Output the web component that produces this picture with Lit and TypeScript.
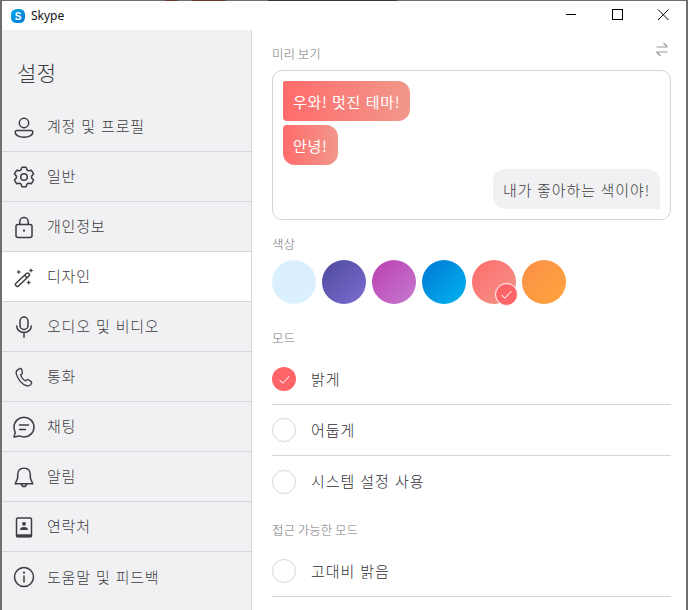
import {LitElement, html, svg, css} from 'lit';
import {customElement} from 'lit/decorators.js';

// six tooth gear, drawn around 12,12
function gearPath() {
  const pts: string[] = [];
  for (let k = 0; k < 6; k++) {
    const a = -90 + k * 60;
    for (const [r, d] of [[7.6, -24], [10, -12], [10, 12], [7.6, 24]]) {
      const rad = ((a + d) * Math.PI) / 180;
      pts.push(`${(12 + r * Math.cos(rad)).toFixed(2)} ${(12 + r * Math.sin(rad)).toFixed(2)}`);
    }
  }
  return `M${pts.join('L')}z`;
}

const icons = {
  user: svg`<circle cx="12" cy="8" r="4.7"/><path d="M5 15.500h14c1 0 1.800.8 1.800 1.800 0 3-4 5-8.800 5s-8.800-2-8.800-5c0-1 .8-1.800 1.800-1.800z"/>`,
  gear: svg`<circle cx="12" cy="12" r="3.300"/><path d="${gearPath()}" stroke-linejoin="round"/>`,
  lock: svg`<rect x="4" y="9.500" width="16" height="13" rx="2"/><path d="M7.800 9.500V6.700a4.200 4.200 0 0 1 8.400 0v2.800"/><circle cx="12" cy="15.700" r="1.100" fill="currentColor" stroke="none"/>`,
  wand: svg`<path d="M3.700 18.500 14.700 8.300a1.200 1.200 0 0 1 1.700 0l.8.8a1.200 1.200 0 0 1 0 1.700L6.300 21.200a1.200 1.200 0 0 1-1.700 0l-.9-.9a1.200 1.200 0 0 1 0-1.800zM12.600 10.200l2.500 2.600" stroke-linejoin="round"/><g fill="currentColor" stroke="none"><path d="M6.700 4.500l.7 1.800 1.800.7-1.800.7-.7 1.800-.7-1.800-1.800-.7 1.800-.7z"/><path d="M19 3l.7 1.800 1.800.7-1.800.7-.7 1.800-.7-1.800-1.800-.7 1.800-.7z"/><path d="M16.700 15l.7 1.800 1.800.7-1.800.7-.7 1.800-.7-1.800-1.800-.7 1.800-.7z"/></g>`,
  mic: svg`<rect x="8" y="2" width="8" height="12.500" rx="4"/><path d="M4.700 11c0 3.800 3.200 6.500 7.300 6.500s7.300-2.700 7.300-6.500M12 17.500v4.700"/>`,
  phone: svg`<g transform="translate(1.2 1.400) scale(.88)"><path d="M7.500 2.500 5 4c-1.500 1-2 2.500-1.500 4.500 1 3.500 2.500 6 4.500 8.500 2.500 3 5 4.500 7.500 5 2 .5 3.500 0 4.500-1.500l.8-1.200c.4-.7.2-1.500-.4-2l-3-2.200c-.7-.5-1.500-.4-2 .2l-1 1.200c-2.500-1-5-4-6-7l1.300-.8c.7-.5.9-1.300.6-2L9.500 3c-.4-.7-1.300-1-2-.5z"/></g>`,
  chat: svg`<path d="M12 2.300c5.500 0 10 4.200 10 9.800s-4.500 9.800-10 9.800c-1.700 0-3.200-.4-4.500-1l-5.500 1 1.300-4.500C2.500 15.800 2 14 2 12.100c0-5.600 4.500-9.800 10-9.800z" stroke-linejoin="round"/><path d="M7.500 10h9M7.500 14.500h6"/>`,
  bell: svg`<path d="M12 3c-3.800 0-6.300 2.800-6.300 6.300V13L3.200 18.800h17.600L18.300 13V9.300C18.300 5.800 15.800 3 12 3z" stroke-linejoin="round"/><path d="M9.500 18.800c.2 1.700 1.200 2.700 2.500 2.700s2.300-1 2.500-2.700"/>`,
  book: svg`<rect x="4.500" y="3" width="15" height="18.700" rx="1.500"/><rect x="4" y="19.300" width="16" height="2.900" fill="currentColor" stroke="none"/><circle cx="12" cy="8.800" r="1.900" fill="currentColor" stroke="none"/><path d="M8 15c0-2 1.500-3 4-3s4 1 4 3z" fill="currentColor" stroke="none"/>`,
  info: svg`<circle cx="12" cy="12" r="9.500"/><path d="M12 11v6"/><circle cx="12" cy="7.700" r="1.100" fill="currentColor" stroke="none"/>`,
};

const menu: [keyof typeof icons, string][] = [
  ['user', '계정 및 프로필'],
  ['gear', '일반'],
  ['lock', '개인정보'],
  ['wand', '디자인'],
  ['mic', '오디오 및 비디오'],
  ['phone', '통화'],
  ['chat', '채팅'],
  ['bell', '알림'],
  ['book', '연락처'],
  ['info', '도움말 및 피드백'],
];

const swatches = [
  'linear-gradient(135deg,#dbf0ff,#dbf0ff)',
  'linear-gradient(135deg,#4f4a9c,#7b6dd1)',
  'linear-gradient(135deg,#b93fb0,#c77ad0)',
  'linear-gradient(135deg,#0078d4,#00b4f0)',
  'linear-gradient(135deg,#ff6b6b,#f1978a)',
  'linear-gradient(135deg,#fa8e47,#ffa53e)',
];

const check = html`<svg viewBox="0 0 12 12" width="13" height="13" fill="none" stroke="#fff" stroke-width="1" opacity=".85"><path d="M1.500 6.500 4.500 9.300 10.500 3"/></svg>`;

@customElement('app-root')
export class AppRoot extends LitElement {
  static override styles = css`
    * {
      box-sizing: border-box;
      margin: 0;
      padding: 0;
    }

    :host {
      display: block;
      width: 688px;
      height: 610px;
      overflow: hidden;
      font-family: "Noto Sans CJK KR", "Noto Sans", sans-serif;
      color: #3c3c41;
      background: #6e6e6e;
    }

    .strip {
      height: 1px;
      background: linear-gradient(90deg, #6e6e6e 0 165px, #6b3a30 165px 178px, #6e6e6e 178px 192px, #6b3a30 192px 226px, #6e6e6e 226px 268px, #33383d 268px 397px, #6e6e6e 397px);
    }

    .window {
      height: 609px;
      margin: 0 2px;
      background: #fff;
      display: flex;
      flex-direction: column;
    }

    .titlebar {
      height: 29px;
      flex: none;
      display: flex;
      align-items: center;
      padding-left: 9px;
      font-family: "Noto Sans", sans-serif;
      font-size: 12px;
      color: #111;
    }

    .titlebar .logo {
      margin-right: 6px;
      display: block;
    }

    .controls {
      margin-left: auto;
      display: flex;
    }

    .controls svg {
      display: block;
      width: 46px;
      height: 29px;
    }

    .body {
      flex: 1;
      display: flex;
      min-height: 0;
    }

    .side {
      width: 250px;
      flex: none;
      background: #f1f1f3;
      border-right: 1px solid #d6d6da;
    }

    .side h1 {
      font-size: 21px;
      font-weight: 300;
      line-height: 28px;
      padding: 28px 0 0 15px;
      height: 72px;
      color: #3c3c41;
      letter-spacing: .5px;
    }

    .item {
      height: 50px;
      display: flex;
      align-items: center;
      padding-left: 10px;
      font-size: 15px;
      font-weight: 300;
      letter-spacing: .8px;
      word-spacing: 1px;
      border-bottom: 1px solid #d6d6da;
    }

    .item span {
      padding-bottom: 2px;
    }

    .item:last-child {
      border-bottom: none;
    }

    .item.active {
      background: #fff;
    }

    .item svg {
      width: 24px;
      height: 24px;
      margin-right: 11px;
      fill: none;
      stroke: currentColor;
      stroke-width: 1.500;
      stroke-linecap: round;
      flex: none;
    }

    .main {
      flex: 1;
      padding: 0 15px 0 20px;
      min-width: 0;
    }

    .label {
      font-size: 12.500px;
      font-weight: 300;
      color: #77777e;
      line-height: 18px;
    }

    .preview-head {
      display: flex;
      justify-content: space-between;
      padding-top: 15px;
      height: 40px;
    }

    .swap {
      width: 12px;
      height: 15px;
      margin: -3px 3px 0 0;
      fill: none;
      stroke: #9a9aa0;
      stroke-width: 1.200;
    }

    .card {
      height: 150px;
      border: 1px solid #d6d6da;
      border-radius: 10px;
      padding: 10px;
      display: flex;
      flex-direction: column;
      align-items: flex-start;
      gap: 4px;
    }

    .bubble {
      height: 40px;
      padding: 0 10px;
      display: flex;
      align-items: center;
      font-size: 15px;
      white-space: nowrap;
      letter-spacing: .7px;
      word-spacing: .5px;
      color: #fff;
      background: linear-gradient(90deg, #ff6b6b, #f1978a);
      border-radius: 2px 12px 12px 4px;
      font-weight: 400;
    }

    .bubble.second {
      border-radius: 4px 12px 12px 12px;
    }

    .bubble.mine {
      align-self: flex-end;
      color: #3c3c41;
      background: #f1f1f3;
      border-radius: 12px 12px 0 12px;
      font-weight: 300;
      letter-spacing: .9px;
    }

    .colors-label {
      padding-top: 15px;
      height: 40px;
    }

    .swatches {
      display: flex;
      gap: 6px;
      height: 44px;
    }

    .swatch {
      width: 44px;
      height: 44px;
      border-radius: 50%;
      position: relative;
    }

    .badge {
      position: absolute;
      right: -2px;
      bottom: -2px;
      width: 23px;
      height: 23px;
      border-radius: 50%;
      background: #ff6469;
      border: 1px solid #fff;
      display: flex;
      align-items: center;
      justify-content: center;
    }

    .mode-label {
      padding-top: 25px;
      height: 50px;
    }

    .radio-row {
      height: 51px;
      display: flex;
      align-items: center;
      gap: 15px;
      font-size: 15px;
      font-weight: 300;
      letter-spacing: .9px;
      word-spacing: 1px;
      border-bottom: 1px solid #d6d6da;
      color: #303034;
    }

    .radio-row.plain {
      border-bottom: none;
    }

    .radio-row span {
      padding-bottom: 2px;
    }

    .radio {
      width: 24px;
      height: 24px;
      border-radius: 50%;
      border: 1px solid #d6d6da;
      display: flex;
      align-items: center;
      justify-content: center;
      flex: none;
    }

    .radio.on {
      background: #ff6469;
      border: none;
    }

    .access-label {
      padding-top: 14px;
      height: 39px;
    }
  `;

  override render() {
    return html`
      <div class="strip"></div>
      <div class="window">
        <div class="titlebar">
          <svg class="logo" width="14" height="14" viewBox="0 0 14 14">
            <defs><linearGradient id="sk" x1="0" y1="0" x2="1" y2="1"><stop offset="0" stop-color="#00a8e8"/><stop offset="1" stop-color="#0078d4"/></linearGradient></defs>
            <rect width="14" height="14" rx="5.500" fill="url(#sk)"/>
            <text x="7" y="10.800" text-anchor="middle" font-size="10" font-weight="700" fill="#fff" font-family="Liberation Sans, sans-serif">S</text>
          </svg>
          <span>Skype</span>
          <div class="controls">
            <svg viewBox="0 0 46 29"><path d="M18 13.500h10" stroke="#000"/></svg>
            <svg viewBox="0 0 46 29"><rect x="18.500" y="8.500" width="10" height="10" fill="none" stroke="#000"/></svg>
            <svg viewBox="0 0 46 29"><path d="M18 8.500l10.500 10.500M28.500 8.500 18 19" stroke="#000" fill="none"/></svg>
          </div>
        </div>
        <div class="body">
          <nav class="side">
            <h1>설정</h1>
            ${menu.map(([icon, text]) => html`
              <div class="item ${icon === 'wand' ? 'active' : ''}">
                <svg viewBox="0 0 24 24">${icons[icon]}</svg>
                <span>${text}</span>
              </div>`)}
          </nav>
          <section class="main">
            <div class="preview-head label">
              <span>미리 보기</span>
              <svg class="swap" viewBox="0 0 12 15"><path d="M.5 5H11.500M7.500 1l4 4M11.500 10H.5M.5 10l4 4"/></svg>
            </div>
            <div class="card">
              <div class="bubble">우와! 멋진 테마!</div>
              <div class="bubble second">안녕!</div>
              <div class="bubble mine">내가 좋아하는 색이야!</div>
            </div>
            <div class="label colors-label">색상</div>
            <div class="swatches">
              ${swatches.map((bg, i) => html`
                <div class="swatch" style="background:${bg}">
                  ${i === 4 ? html`<div class="badge">${check}</div>` : ''}
                </div>`)}
            </div>
            <div class="label mode-label">모드</div>
            <div class="radio-row"><div class="radio on">${check}</div><span>밝게</span></div>
            <div class="radio-row"><div class="radio"></div><span>어둡게</span></div>
            <div class="radio-row plain"><div class="radio"></div><span>시스템 설정 사용</span></div>
            <div class="label access-label">접근 가능한 모드</div>
            <div class="radio-row"><div class="radio"></div><span>고대비 밝음</span></div>
          </section>
        </div>
      </div>
    `;
  }
}

declare global {
  interface HTMLElementTagNameMap {
    'app-root': AppRoot;
  }
}
